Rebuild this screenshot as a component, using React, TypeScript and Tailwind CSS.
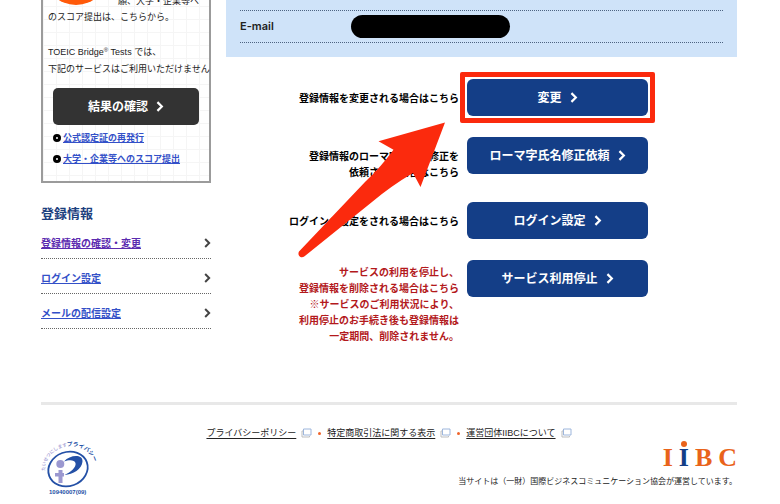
import React from "react"

type ServiceAction = {
  lines: string[]
  button: string
  tone?: "warning"
  highlighted?: boolean
}

const sideLinks = [
  { label: "登録情報の確認・変更", visited: true },
  { label: "ログイン設定", visited: false },
  { label: "メールの配信設定", visited: false },
]

const scoreLinks = ["公式認定証の再発行", "大学・企業等へのスコア提出"]

const actions: ServiceAction[] = [
  { lines: ["登録情報を変更される場合はこちら"], button: "変更", highlighted: true },
  { lines: ["登録情報のローマ字氏名の修正を", "依頼される場合はこちら"], button: "ローマ字氏名修正依頼" },
  { lines: ["ログインの設定をされる場合はこちら"], button: "ログイン設定" },
  {
    lines: [
      "サービスの利用を停止し、",
      "登録情報を削除される場合はこちら",
      "※サービスのご利用状況により、",
      "利用停止のお手続き後も登録情報は",
      "一定期間、削除されません。",
    ],
    button: "サービス利用停止",
    tone: "warning",
  },
]

const footerLinks = ["プライバシーポリシー", "特定商取引法に関する表示", "運営団体IIBCについて"]

function Chevron({ className }: { className: string }) {
  return (
    <svg className={className} viewBox="0 0 8 12" fill="none" aria-hidden="true">
      <path d="M1.200 1.200 L6 6 L1.200 10.800" stroke="currentColor" strokeWidth="2.400" />
    </svg>
  )
}

function ScoreBox() {
  return (
    <section className="-mt-[35px] border-2 border-[#9b9b9b] bg-white bg-[linear-gradient(#f5f5f5_1px,transparent_1px),linear-gradient(90deg,#f5f5f5_1px,transparent_1px)] bg-[size:13px_13px] pb-3">
      <div className="flex items-end">
        <div className="-mt-[26px] mb-1 ml-px h-16 w-16 shrink-0 rounded-full bg-[#ff5a0a]" />
        <p className="whitespace-nowrap pl-[10px] text-[9px] leading-4">願、大学・企業等へ</p>
      </div>
      <div className="whitespace-nowrap pl-[5px] text-[9px] leading-[17px]">
        <p>のスコア提出は、こちらから。</p>
        <p className="mt-[18px]">
          TOEIC Bridge<sup className="text-[6px]">®</sup> Tests では、
        </p>
        <p>下記のサービスはご利用いただけません</p>
      </div>
      <button
        type="button"
        className="mx-auto mt-[10px] flex h-[37px] w-[146px] items-center justify-center gap-2 rounded-[5px] bg-[#333] text-xs font-bold text-white"
      >
        結果の確認
        <Chevron className="h-[11px] w-2" />
      </button>
      <ul className="mt-[2px] pl-[10px]">
        {scoreLinks.map((label) => (
          <li key={label} className="flex h-[21px] items-center gap-[2px]">
            <span className="h-2 w-2 shrink-0 rounded-full border-[3px] border-black bg-white" />
            <a href="#" className="whitespace-nowrap text-[9px] font-bold leading-3 text-[#3350c8] underline">
              {label}
            </a>
          </li>
        ))}
      </ul>
    </section>
  )
}

function SideNav() {
  return (
    <nav className="mt-[21px]">
      <h2 className="text-[13px] font-bold leading-5 text-[#1c407e]">登録情報</h2>
      <ul>
        {sideLinks.map((link) => (
          <li
            key={link.label}
            className="flex h-[35px] items-center justify-between border-b border-dotted border-[#666] pt-1"
          >
            <a
              href="#"
              className={
                link.visited
                  ? "text-[10px] font-bold text-[#5b2bb0] underline"
                  : "text-[10px] font-bold text-[#3350c8] underline"
              }
            >
              {link.label}
            </a>
            <Chevron className="h-[10px] w-[7px] text-[#444]" />
          </li>
        ))}
      </ul>
    </nav>
  )
}

function ActionRow({ action }: { action: ServiceAction }) {
  const warning = action.tone === "warning"
  return (
    <div className="flex gap-2">
      <p
        className={
          warning
            ? "flex-1 pt-[5px] text-right text-[10px] font-bold leading-4 text-[#b3191c]"
            : "flex-1 pt-3 text-right text-[10px] font-bold leading-4 text-black"
        }
      >
        {action.lines.map((line) => (
          <span key={line} className="block">
            {line}
          </span>
        ))}
      </p>
      <div className="relative h-[37px] w-[181px]">
        <button
          type="button"
          className="flex h-full w-full items-center justify-center gap-2 rounded-[6px] bg-[#143e87] text-xs font-bold text-white"
        >
          {action.button}
          <Chevron className="h-[11px] w-2" />
        </button>
        {action.highlighted && (
          <div className="pointer-events-none absolute -inset-x-[7px] -inset-y-[7px] rounded-[2px] border-[5px] border-[#fb2a0d]" />
        )}
      </div>
    </div>
  )
}

function PointerArrow() {
  return (
    <svg
      className="pointer-events-none absolute left-[72px] top-[42px] h-[138px] w-[150px]"
      viewBox="298 121 150 138"
      aria-hidden="true"
    >
      <path
        d="M445 122.500 L378.500 141.300 L393.500 149.800 Q381 167 365 182 L299 251.500 Q297.500 254.500 300 256.700 Q303 258.300 305.500 255.500 L372 202 Q391 186 413 173 L420.500 187 Z"
        fill="#fb2a0d"
      />
    </svg>
  )
}

function PrivacyMark() {
  return (
    <svg className="h-[56px] w-[56px] overflow-visible" viewBox="0 0 56 56" role="img" aria-label="プライバシーマーク">
      <defs>
        <path id="mark-arc" d="M4 30 A24 21 -15 0 1 53 24" fill="none" />
      </defs>
      <text fontSize="4.500" fontWeight="700" fill="#aaa6d8">
        <textPath href="#mark-arc">
          たいせつにします
          <tspan fontSize="5.600" fill="#2450a6">
            プライバシー
          </tspan>
        </textPath>
      </text>
      <ellipse cx="27" cy="28" rx="20" ry="17" fill="none" stroke="#2450a6" strokeWidth="1.800" transform="rotate(-20 27 28)" />
      <circle cx="19.300" cy="23" r="4" fill="#9b98d0" />
      <path d="M14 32 H17.500 V29 H21.500 V32 H23 V35.500 H21.500 V42 H17.500 V35.500 H14 Z" fill="#9b98d0" />
      <path d="M23 20.500 C29 13.500 42 13 41.500 20.500 C41 28 32 33.500 23.500 34 C30 31 35.500 26 34.500 22 C33.500 18.500 28 18.500 23 20.500 Z" fill="#2450a6" />
      <text x="8" y="53" fontSize="6" fontWeight="700" fill="#2450a6">
        10940007(09)
      </text>
    </svg>
  )
}

function WindowIcon() {
  return (
    <svg className="h-[10px] w-[11px]" viewBox="0 0 11 10" fill="none" aria-hidden="true">
      <path d="M2.500 1 H10 V7 H2.500 Z" fill="#fff" stroke="#9db6dc" />
      <path d="M2 3 H1 V9 H8.500 V8" stroke="#bdbdbd" />
    </svg>
  )
}

function IibcLogo() {
  return (
    <div
      aria-label="IIBC"
      className="flex gap-[6px] font-['Liberation_Serif',serif] text-[26px] font-bold leading-6 text-[#e9631a]"
    >
      <span>I</span>
      <span className="relative text-[#143e87]">
        I
        <i className="absolute -top-[5px] left-[2px] h-[6px] w-[6px] rounded-full bg-[#e9631a]" />
      </span>
      <span>B</span>
      <span>C</span>
    </div>
  )
}

export default function App() {
  return (
    <div className="min-h-screen overflow-hidden bg-white pl-[41px] pr-[43px] font-['Liberation_Sans','Noto_Sans_CJK_JP',sans-serif] text-[#222]">
      <div className="flex items-start gap-[15px]">
        <aside className="w-[170px] shrink-0">
          <ScoreBox />
          <SideNav />
        </aside>

        <main className="min-w-0 flex-1">
          <section className="bg-[#cfe3f9] px-[14px] pb-[14px] pt-[10px]">
            <dl className="flex h-[33px] items-center border-y border-dotted border-[#4d6482]">
              <dt className="w-[111px] font-['Inter',sans-serif] text-[11px] font-semibold">E-mail</dt>
              <dd className="h-[23px] w-[159px] rounded-full bg-black" />
            </dl>
          </section>

          <div className="relative mt-[22px] flex flex-col gap-[21px] pr-[89px]">
            {actions.map((action) => (
              <ActionRow key={action.button} action={action} />
            ))}
            <PointerArrow />
          </div>
        </main>
      </div>

      <footer className="mt-[57px] border-t-[3px] border-[#e8e8e8] pt-5">
        <ul className="flex items-center justify-center text-[9px] leading-4">
          {footerLinks.map((label, index) => (
            <li key={label} className="flex items-center">
              {index > 0 && <span className="mx-[6px] h-[3px] w-[3px] rounded-full bg-[#f0642a]" />}
              <a href="#" className="mr-[5px] underline underline-offset-2">
                {label}
              </a>
              <WindowIcon />
            </li>
          ))}
        </ul>
        <div className="flex items-start justify-between">
          <PrivacyMark />
          <div className="flex flex-col items-end pt-[5px]">
            <IibcLogo />
            <p className="mt-[6px] text-[8px] leading-3">
              当サイトは（一財）国際ビジネスコミュニケーション協会が運営しています。
            </p>
          </div>
        </div>
      </footer>
    </div>
  )
}
